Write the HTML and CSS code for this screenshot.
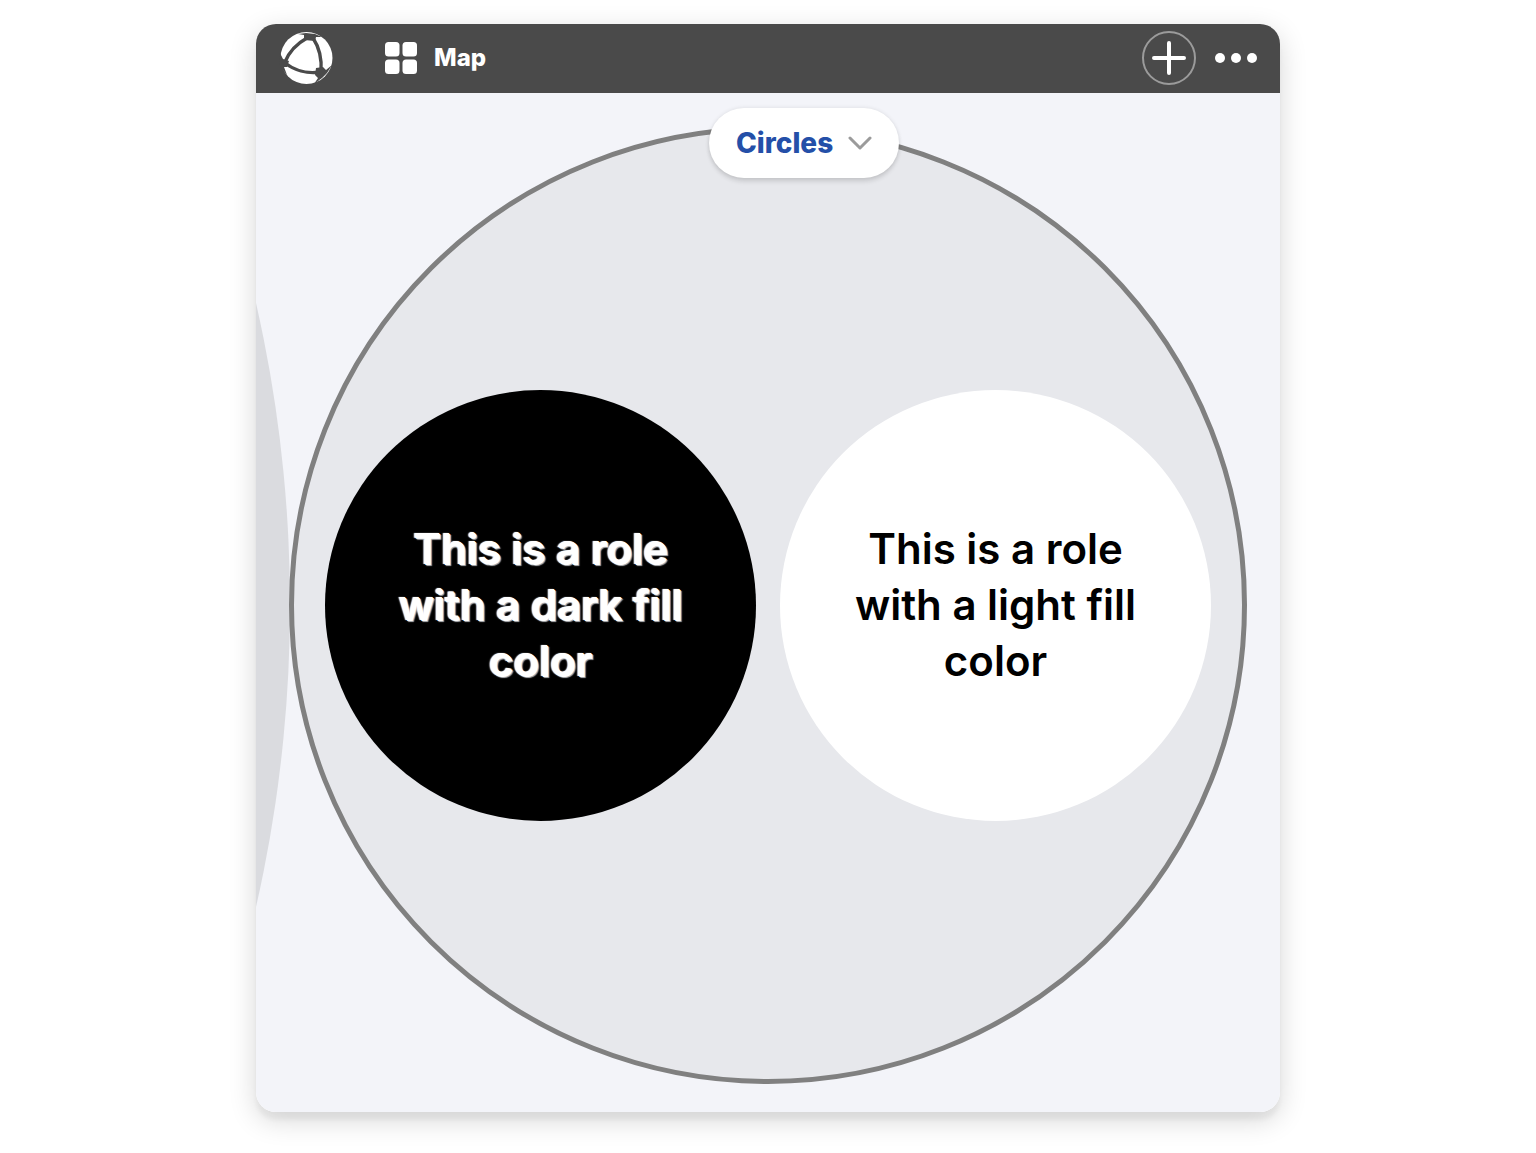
FILE: index.html
```
<!DOCTYPE html>
<html lang="en">
<head>
    <meta charset="UTF-8">
    <meta name="viewport" content="width=device-width, initial-scale=1.0">
    <title>Map</title>
    <link rel="stylesheet" href="styles.css">
</head>
<body>
    <div class="app">
        <header class="navbar">
            <a class="logo" href="#" aria-label="Home">
                <svg viewBox="0 0 54 54" width="54" height="54">
                    <circle cx="27.5" cy="27" r="26" fill="#fff"/>
                    <g fill="none" stroke="#4a4a4a" stroke-width="3.4">
                        <path d="M28 7C19 12 10 21 6 31"/>
                        <path d="M34 7C40 16 43 28 42 41"/>
                        <path d="M6 32C15 39 28 43 41 41"/>
                    </g>
                    <g fill="#4a4a4a">
                        <path d="M19 3L27 2L36 3L43 6L37 6L36 10L25 9L25 4Z"/>
                        <path d="M1 22L4 28L10 30L8 36L5 36L8 44L3 38L0 32Z"/>
                        <path d="M37 37L44 36L47 39L53 34L48 42L43 47L35 53L39 47L36 44Z"/>
                    </g>
                </svg>
            </a>
            <a class="nav-link" href="#">
                <svg viewBox="0 0 32 32" width="32" height="32" fill="#fff">
                    <rect width="14.5" height="14.5" rx="3.5"/>
                    <rect x="17.5" width="14.5" height="14.5" rx="3.5"/>
                    <rect y="17.5" width="14.5" height="14.5" rx="3.5"/>
                    <rect x="17.5" y="17.5" width="14.5" height="14.5" rx="3.5"/>
                </svg>
                <span>Map</span>
            </a>
            <div class="actions">
                <button class="add-btn" type="button" aria-label="Add">
                    <svg viewBox="0 0 34 34" width="34" height="34" fill="none" stroke="#fff" stroke-width="4" stroke-linecap="round">
                        <path d="M17 2V32M2 17H32"/>
                    </svg>
                </button>
                <button class="more-btn" type="button" aria-label="More">
                    <svg viewBox="0 0 42 10" width="42" height="10" fill="#fff">
                        <circle cx="5" cy="5" r="5"/>
                        <circle cx="21" cy="5" r="5"/>
                        <circle cx="37" cy="5" r="5"/>
                    </svg>
                </button>
            </div>
        </header>

        <main class="map">
            <div class="neighbour-circle"></div>
            <div class="circle">
                <div class="role role-dark">This is a role with a dark fill color</div>
                <div class="role role-light">This is a role with a light fill color</div>
            </div>
            <button class="circle-label" type="button">
                Circles
                <svg viewBox="0 0 24 14" width="24" height="14" fill="none" stroke="#9b9b9b" stroke-width="3" stroke-linecap="round" stroke-linejoin="round">
                    <path d="M2 2L12 12L22 2"/>
                </svg>
            </button>
        </main>
    </div>
</body>
</html>
```

FILE: styles.css
```
* {
    margin: 0;
    padding: 0;
    box-sizing: border-box;
}

body {
    min-height: 100vh;
    padding: 24px;
    font-family: Inter, "Liberation Sans", sans-serif;
    background-color: #fff;
}

.app {
    max-width: 1024px;
    margin: 0 auto;
    border-radius: 20px;
    overflow: hidden;
    box-shadow: 0 8px 28px rgba(0, 0, 0, 0.16), 0 8px 4px rgba(0, 0, 0, 0.04);
}

/* Top bar */
.navbar {
    display: flex;
    align-items: center;
    height: 69px;
    padding: 0 23px 2px;
    background-color: #4a4a4a;
}

.logo,
.nav-link {
    display: flex;
    align-items: center;
}

.nav-link {
    gap: 17px;
    margin-left: 52px;
    color: #fff;
    font-size: 24px;
    font-weight: 800;
    text-decoration: none;
}

.actions {
    display: flex;
    align-items: center;
    gap: 19px;
    margin-left: auto;
}

.actions button {
    display: flex;
    align-items: center;
    justify-content: center;
    background: none;
    border: none;
    cursor: pointer;
}

.actions .add-btn {
    width: 54px;
    height: 54px;
    border: 2px solid #9b9b9b;
    border-radius: 50%;
}

/* Map */
.map {
    position: relative;
    padding: 33px 33px 28px;
    background-color: #f3f4f9;
    overflow: hidden;
}

.neighbour-circle {
    position: absolute;
    top: 50%;
    right: calc(100% - 34px);
    width: 2716px;
    height: 2716px;
    margin-top: -1356px;
    border-radius: 50%;
    background-color: #dadbdf;
}

.circle {
    position: relative;
    display: flex;
    align-items: center;
    gap: 24px;
    aspect-ratio: 1;
    padding: 0 31px;
    border: 5px solid #808080;
    border-radius: 50%;
    background-color: #e7e8ec;
}

.role {
    display: flex;
    flex: 1;
    align-items: center;
    aspect-ratio: 1;
    padding: 0 68px;
    border-radius: 50%;
    font-size: 42px;
    font-weight: 600;
    line-height: 56px;
    text-align: center;
}

.role-dark {
    background-color: #000;
    color: #fff;
    text-shadow: 1px 1px 0 #fff, 2px 2px 1px #b4b6ba, -1px 0 1px #fff;
}

.role-light {
    background-color: #fff;
    color: #000;
}

.circle-label {
    position: absolute;
    top: 15px;
    left: 453px;
    display: flex;
    align-items: center;
    gap: 15px;
    height: 70px;
    padding: 0 27px;
    border: none;
    border-radius: 35px;
    background-color: #fff;
    color: #244fa8;
    font-family: inherit;
    font-size: 28px;
    font-weight: 800;
    box-shadow: 0 4px 4px rgba(0, 0, 0, 0.1), 0 0 4px rgba(0, 0, 0, 0.1);
    cursor: pointer;
}
```
